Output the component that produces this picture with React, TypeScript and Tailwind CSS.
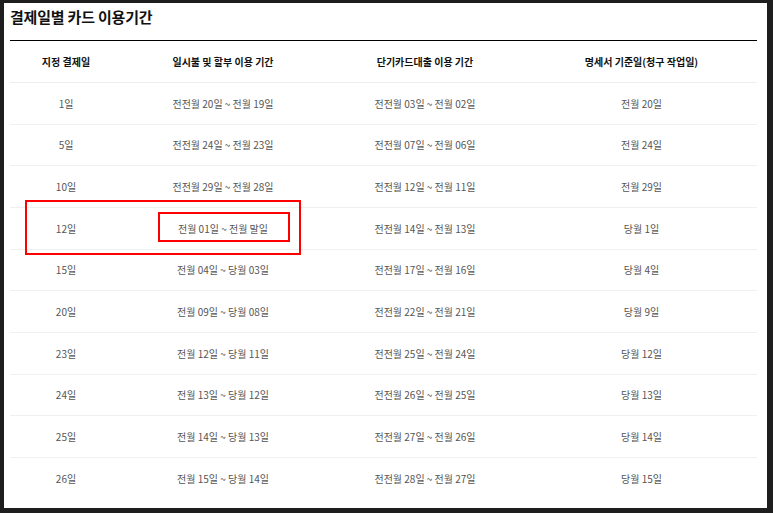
const rows = [
  ['1일', '전전월 20일 ~ 전월 19일', '전전월 03일 ~ 전월 02일', '전월 20일'],
  ['5일', '전전월 24일 ~ 전월 23일', '전전월 07일 ~ 전월 06일', '전월 24일'],
  ['10일', '전전월 29일 ~ 전월 28일', '전전월 12일 ~ 전월 11일', '전월 29일'],
  ['12일', '전월 01일 ~ 전월 말일', '전전월 14일 ~ 전월 13일', '당월 1일'],
  ['15일', '전월 04일 ~ 당월 03일', '전전월 17일 ~ 전월 16일', '당월 4일'],
  ['20일', '전월 09일 ~ 당월 08일', '전전월 22일 ~ 전월 21일', '당월 9일'],
  ['23일', '전월 12일 ~ 당월 11일', '전전월 25일 ~ 전월 24일', '당월 12일'],
  ['24일', '전월 13일 ~ 당월 12일', '전전월 26일 ~ 전월 25일', '당월 13일'],
  ['25일', '전월 14일 ~ 당월 13일', '전전월 27일 ~ 전월 26일', '당월 14일'],
  ['26일', '전월 15일 ~ 당월 14일', '전전월 28일 ~ 전월 27일', '당월 15일'],
]

const headers = ['지정 결제일', '일시불 및 할부 이용 기간', '단기카드대출 이용 기간', '명세서 기준일(청구 작업일)']

// 15% / 27% / 27% / 31%
const grid = 'grid grid-cols-[112px_202px_202px_1fr] items-center text-center'

export default function App() {
  return (
    <div
      className="w-[773px] h-[513px] bg-[#1e1e1e] pt-[3px] pl-[4px] pr-[6px] pb-[5px]"
      style={{ fontFamily: '"Noto Sans CJK KR", "Noto Sans", sans-serif' }}
    >
      <div className="relative h-full bg-white pl-[6px] pr-[10px]">
        <h1 className="pt-[3px] h-[37px] text-[15px] font-bold leading-[22px] text-[#111] tracking-[-0.2px]">
          결제일별 카드 이용기간
        </h1>
        <div className="border-t border-black" />
        <div className={`${grid} h-[42px] border-b border-[#eeeeee] text-[10px] font-bold text-[#111]`}>
          {headers.map((h, i) => (
            <div key={i}>{h}</div>
          ))}
        </div>
        {rows.map((r, ri) => (
          <div
            key={ri}
            className={`${grid} h-[41.67px] text-[10px] text-[#555] ${ri < rows.length - 1 ? 'border-b border-[#f0f0f0]' : ''}`}
          >
            {r.map((c, i) => (
              <div key={i}>{c}</div>
            ))}
          </div>
        ))}

        {/* highlight annotations */}
        <div className="absolute left-[21px] top-[197px] w-[276px] h-[55px] border-2 border-[#ff0000]" />
        <div className="absolute left-[154px] top-[209px] w-[132px] h-[30px] border-2 border-[#ff0000]" />
      </div>
    </div>
  )
}
